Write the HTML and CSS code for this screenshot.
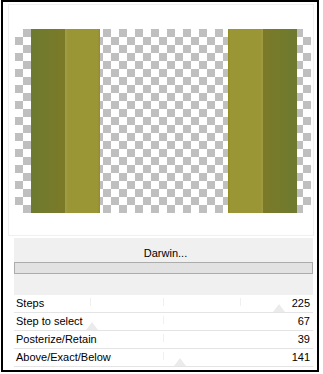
FILE: index.html
```html
<!DOCTYPE html>
<html lang="en">
<head>
    <meta charset="UTF-8">
    <title>Darwin</title>
    <link rel="stylesheet" href="styles.css">
</head>
<body>

<div class="dialog">
    <!-- Preview -->
    <div class="preview-frame">
        <div class="preview">
            <div class="bar dark"></div>
            <div class="bar light"></div>
            <div class="spacer"></div>
            <div class="bar light right"></div>
            <div class="bar dark right"></div>
        </div>
    </div>

    <!-- Controls -->
    <div class="controls">
        <div class="panel">
            <div class="darwin">Darwin...</div>
            <div class="progress"></div>
        </div>

        <div class="row">
            <span class="label">Steps</span>
            <span class="value">225</span>
            <span class="tick" style="left: 76px"></span>
            <span class="tick" style="left: 149px"></span>
            <span class="tick" style="left: 226px"></span>
            <span class="thumb" style="left: 259px"></span>
        </div>
        <div class="row">
            <span class="label">Step to select</span>
            <span class="value">67</span>
            <span class="tick" style="left: 149px"></span>
            <span class="thumb" style="left: 72px"></span>
        </div>
        <div class="row">
            <span class="label">Posterize/Retain</span>
            <span class="value">39</span>
            <span class="tick" style="left: 149px"></span>
        </div>
        <div class="row">
            <span class="label">Above/Exact/Below</span>
            <span class="value">141</span>
            <span class="tick" style="left: 149px"></span>
            <span class="thumb" style="left: 160px"></span>
        </div>
    </div>
</div>

</body>
</html>
```

FILE: styles.css
```css
body {
    margin: 0;
    background-color: #fff;
    font-family: "Liberation Sans", Arial, sans-serif;
    font-size: 11px;
    color: #000;
}
.dialog {
    margin-left: 1px;
    width: 318px;
    height: 372px;
    box-sizing: border-box;
    border: 2px solid #000;
    background-color: #fff;
}
.preview-frame {
    margin: 2px 0 0 5px;
    width: 306px;
    height: 232px;
    box-sizing: border-box;
    border: 1px solid #f0f0f0;
    padding: 24px 0 0 6px;
}
.preview {
    display: flex;
    width: 296px;
    height: 184px;
    background: repeating-conic-gradient(#bfbfbf 0 25%, #fff 0 50%) 0 0 / 16px 16px;
}
.bar {
    width: 35px;
    height: 100%;
}
.bar.dark {
    width: 34px;
    margin-left: 16px;
    background: linear-gradient(to right, #6d7a30, #7c7a28);
}
.bar.light {
    background: linear-gradient(to right, #a09c45 0, #a09c45 1px, #9a9636 3px, #9a9636 33px, #938b1e 35px);
}
.spacer { flex: 1; }
.bar.light.right {
    background: linear-gradient(to right, #938b1e 0, #9a9636 2px, #9a9636 32px, #a09c45 35px);
}
.bar.dark.right {
    margin-left: 0;
    margin-right: 14px;
    background: linear-gradient(to right, #7c7a28, #6d7a30);
}
.controls {
    margin: 2px 0 0 11px;
    width: 299px;
}
.panel {
    background-color: #f0f0f0;
    height: 57px;
}
.darwin {
    height: 24px;
    box-sizing: border-box;
    padding-top: 9px;
    line-height: 13px;
    text-align: center;
    padding-left: 4px;
}
.progress {
    height: 12px;
    box-sizing: border-box;
    border: 1px solid #acacac;
    background-color: #e2e2e2;
}
.row {
    position: relative;
    display: flex;
    justify-content: space-between;
    height: 18px;
    box-sizing: border-box;
    line-height: 17px;
    padding: 0 3px 0 2px;
    border-bottom: 1px solid #e4e4e4;
}
.label, .value {
    position: relative;
    z-index: 1;
}
.tick {
    position: absolute;
    top: 3px;
    width: 1px;
    height: 8px;
    background-color: #f0f0f0;
}
.thumb {
    position: absolute;
    bottom: 0;
    width: 0;
    height: 0;
    border-left: 6px solid transparent;
    border-right: 6px solid transparent;
    border-bottom: 8px solid #ebebeb;
}
```
